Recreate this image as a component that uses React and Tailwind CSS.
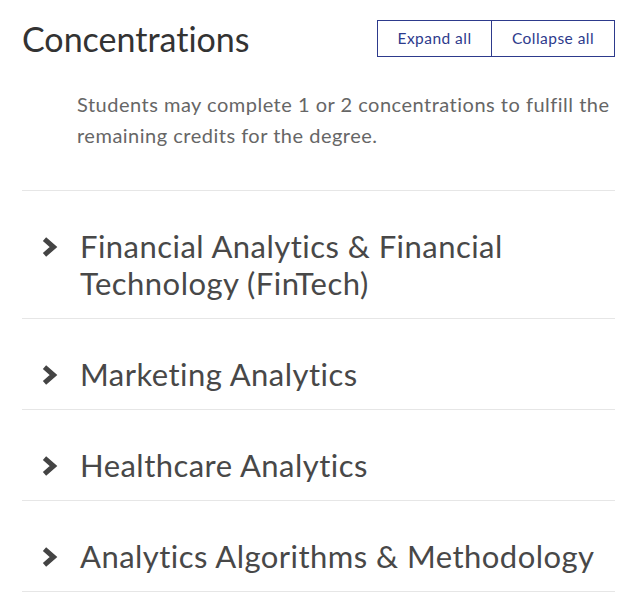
import React from 'react';

const items = [
  'Financial Analytics & Financial Technology (FinTech)',
  'Marketing Analytics',
  'Healthcare Analytics',
  'Analytics Algorithms & Methodology',
];

const Chevron = () => (
  <svg width="17" height="22" viewBox="0 0 17 22" className="text-[#444]">
    <path d="M3.5 3.2 L12.5 11 L3.5 18.8" fill="none" stroke="currentColor" strokeWidth="5" strokeLinejoin="miter" />
  </svg>
);

export default function App() {
  const [open, setOpen] = React.useState({});

  return (
    <div className="min-h-[616px] bg-white pl-[22px] pr-[23px] pt-[20px] font-['Lato','Liberation_Sans',sans-serif] [font-variant-ligatures:none]">
      {/* Header */}
      <div className="flex items-start justify-between">
        <h2 className="mt-[-1px] text-[34px] leading-[40px] text-[#333] font-normal">Concentrations</h2>
        <div className="flex h-[37px] border border-[#2d3a8c]">
          <button
            onClick={() => setOpen({ 0: true, 1: true, 2: true, 3: true })}
            className="w-[114px] border-r border-[#2d3a8c] text-[15.5px] tracking-[0.03em] text-[#2d3a8c]"
          >
            Expand all
          </button>
          <button onClick={() => setOpen({})} className="w-[122px] text-[15.5px] tracking-[0.03em] text-[#2d3a8c]">
            Collapse all
          </button>
        </div>
      </div>

      <p className="mt-[30px] pl-[55px] text-[20px] leading-[31px] tracking-[0.025em] text-[#666]">
        Students may complete 1 or 2 concentrations to fulfill the remaining credits for the degree.
      </p>

      {/* Accordion */}
      <div className="mt-[39px] border-t border-[#e6e6e6]">
        {items.map((name, i) => (
          <button
            key={name}
            onClick={() => setOpen({ ...open, [i]: !open[i] })}
            className="flex w-full items-start border-b border-[#e6e6e6] pb-[16px] pt-[37px] text-left"
          >
            <div className="ml-[19px] flex h-[37px] w-[17px] shrink-0 items-center">
              <Chevron />
            </div>
            <span className="ml-[22px] text-[31px] leading-[37px] tracking-[0.015em] text-[#484848]">{name}</span>
          </button>
        ))}
      </div>
    </div>
  );
}
